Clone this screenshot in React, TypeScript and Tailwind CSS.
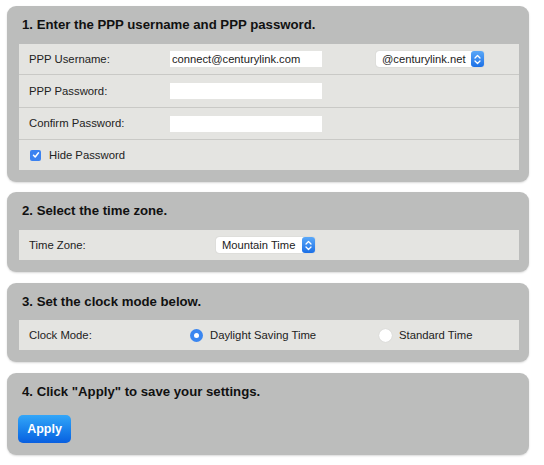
import { FC, ReactNode } from "react";

// blue up/down stepper used by the mac-style selects
const Stepper: FC = () => (
  <span className="flex h-[16px] w-[13px] items-center justify-center rounded-[3px] bg-gradient-to-b from-[#5aa8f8] to-[#1a6fe6]">
    <svg width="7" height="11" viewBox="0 0 7 11" fill="none" stroke="white" strokeWidth="1.3" strokeLinecap="round" strokeLinejoin="round">
      <path d="M1 4 L3.5 1.5 L6 4" />
      <path d="M1 7 L3.5 9.5 L6 7" />
    </svg>
  </span>
);

const Select: FC<{ value: string; className: string }> = ({ value, className }) => (
  <div className={`flex h-[16px] items-center justify-between rounded-[3px] bg-white pl-[6px] shadow-[0_0_1px_rgba(0,0,0,0.25)] ${className}`}>
    <span className="text-[11.2px] text-[#222]">{value}</span>
    <Stepper />
  </div>
);

const Input: FC<{ value?: string }> = ({ value }) => (
  <div className="flex h-[16px] w-[152px] items-center bg-white px-[2px] text-[11.2px] text-[#222]">{value}</div>
);

const Row: FC<{ children: ReactNode; h: string; last?: boolean }> = ({ children, h, last }) => (
  <div className={`flex items-center pl-[10px] text-[11.3px] ${h} ${last ? "" : "border-b border-[#c9c9c6]"}`}>{children}</div>
);

const Panel: FC<{ title: string; children: ReactNode; head?: string }> = ({ title, children, head = "h-[38px]" }) => (
  <div className="ml-[7px] w-[522px] rounded-[9px] bg-[#bcbdbc] pb-[12px] pl-[12px] pr-[10px] shadow-[0_1px_2px_rgba(0,0,0,0.15)]">
    <div className={`flex items-center pl-[3px] text-[13.2px] font-bold text-[#111] ${head}`}>{title}</div>
    {children}
  </div>
);

export default function App() {
  return (
    <div className="h-[465px] w-[544px] bg-white pt-[6px] text-[#222]" style={{ fontFamily: '"Liberation Sans", Arial, sans-serif' }}>
      <Panel title="1. Enter the PPP username and PPP password.">
        <div className="bg-[#e4e4e1]">
          <Row h="h-[31px]">
            <span className="w-[141px]">PPP Username:</span>
            <Input value="connect@centurylink.com" />
            <Select value="@centurylink.net" className="ml-[54px] w-[108px]" />
          </Row>
          <Row h="h-[33px]">
            <span className="w-[141px]">PPP Password:</span>
            <Input />
          </Row>
          <Row h="h-[32px]">
            <span className="w-[141px]">Confirm Password:</span>
            <Input />
          </Row>
          <Row h="h-[30px]" last>
            <span className="ml-[1px] flex h-[11px] w-[11px] items-center justify-center rounded-[2px] bg-[#3b82f0]">
              <svg width="8" height="8" viewBox="0 0 8 8" fill="none" stroke="white" strokeWidth="1.5" strokeLinecap="round" strokeLinejoin="round">
                <path d="M1.5 4.2 L3.2 6 L6.5 1.8" />
              </svg>
            </span>
            <span className="ml-[8px]">Hide Password</span>
          </Row>
        </div>
      </Panel>

      <div className="h-[10px]" />
      <Panel title="2. Select the time zone.">
        <div className="bg-[#e4e4e1]">
          <Row h="h-[30px]" last>
            <span className="w-[187px]">Time Zone:</span>
            <Select value="Mountain Time" className="w-[99px]" />
          </Row>
        </div>
      </Panel>

      <div className="h-[11px]" />
      <Panel title="3. Set the clock mode below." head="h-[37px]">
        <div className="bg-[#e4e4e1]">
          <Row h="h-[30px]" last>
            <span className="w-[161px]">Clock Mode:</span>
            <span className="flex h-[13px] w-[13px] items-center justify-center rounded-full bg-[#3a86f0]">
              <span className="h-[5px] w-[5px] rounded-full bg-white" />
            </span>
            <span className="ml-[7px] w-[169px]">Daylight Saving Time</span>
            <span className="h-[13px] w-[13px] rounded-full bg-white shadow-[0_0_1px_rgba(0,0,0,0.2)]" />
            <span className="ml-[7px]">Standard Time</span>
          </Row>
        </div>
      </Panel>

      <div className="h-[11px]" />
      <Panel title='4. Click "Apply" to save your settings.'>
        <button className="-ml-[1px] mt-[4px] h-[28px] w-[53px] rounded-[5px] bg-gradient-to-b from-[#33a6f8] to-[#0a5fe0] text-[12.5px] font-bold text-white">
          Apply
        </button>
      </Panel>
    </div>
  );
}
